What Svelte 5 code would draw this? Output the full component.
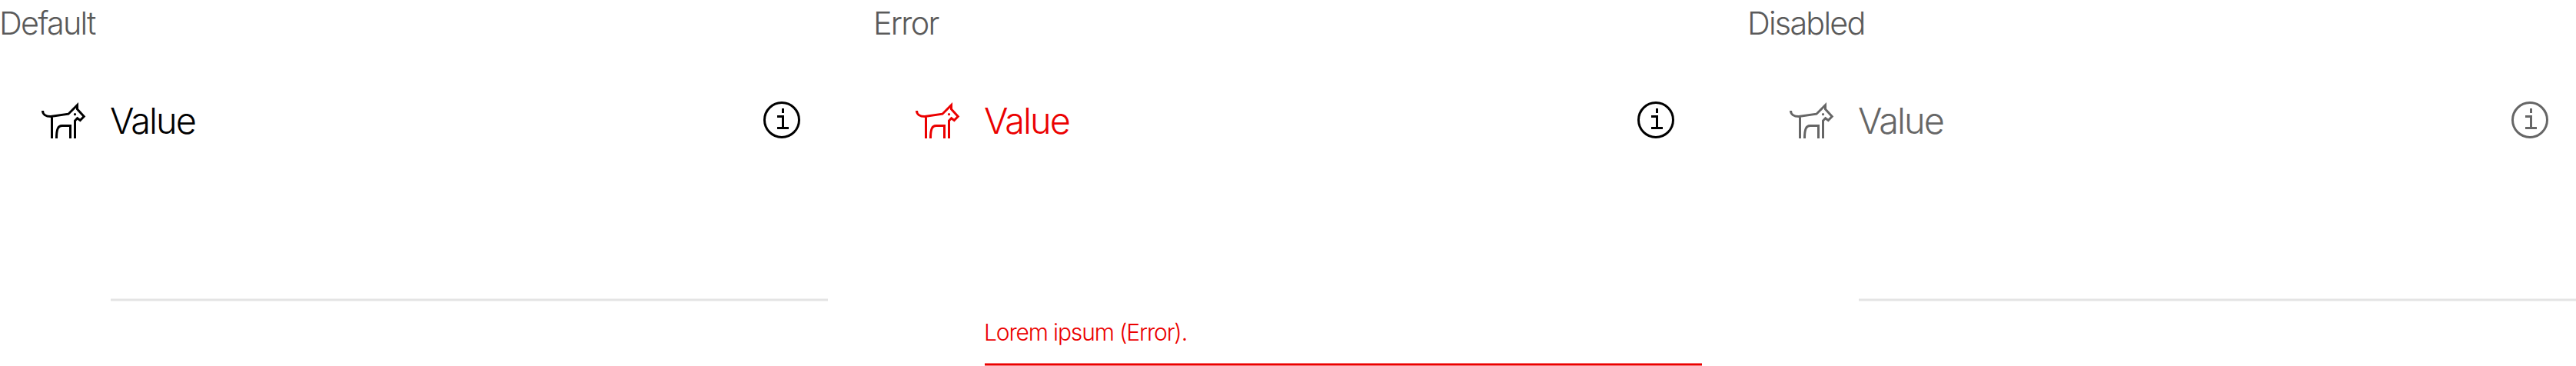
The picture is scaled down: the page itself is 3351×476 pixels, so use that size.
<script>
  const fields = [
    { title: 'Default', state: 'default', value: 'Value', error: '' },
    { title: 'Error', state: 'error', value: 'Value', error: 'Lorem ipsum (Error).' },
    { title: 'Disabled', state: 'disabled', value: 'Value', error: '' }
  ];
</script>

<main>
  {#each fields as field}
    <section class={field.state}>
      <h2>{field.title}</h2>
      <div class="row">
        <svg class="dog" width="60" height="48" viewBox="0 0 60 48" fill="none" stroke="currentColor" stroke-width="3">
          <path d="M1.5 12C1.5 16.5 5.5 19.5 12 19.5L35 16.2L46.5 4.6V10L55.2 19.5L50.3 24.5L46.6 21.8L43.5 25V48M13.5 19.5V48M19.5 48C19.5 36 21.5 31.5 26.5 31.5H37.5V48" />
          <circle cx="43.5" cy="16.7" r="1.6" fill="currentColor" stroke="none" />
        </svg>
        <span class="value">{field.value}</span>
        <svg class="info" width="48" height="48" viewBox="0 0 48 48" fill="none" stroke="currentColor" stroke-width="3">
          <circle cx="24" cy="24" r="22.5" />
          <path d="M25.5 9V15M18 19.5H25.5V34.5M18 34.5H33" />
        </svg>
      </div>
      <div class="foot">
        {#if field.error}<p>{field.error}</p>{/if}
      </div>
      <svg class="line" width="933" height="4" viewBox="0 0 933 4"><rect y=".5" width="933" height="3" fill="currentColor" /></svg>
    </section>
  {/each}
</main>

<style>
  :global(body) { margin: 0; background: #fff; }
  main { display: flex; gap: 60px; width: 3351px; height: 476px; overflow: hidden; font-family: Inter, "Liberation Sans", sans-serif; font-weight: 300; }
  section { width: 1077px; flex: none; display: flex; flex-direction: column; color: #000; }
  h2 { margin: 0; height: 60px; line-height: 60px; font-size: 41.3px; font-weight: 300; letter-spacing: -1.75px; text-indent: -1px; color: #5a5a5a; }
  .row { height: 48px; padding: 72px 36px 0 54px; display: flex; align-items: center; }
  .value { flex: 1; margin-left: 29px; padding-top: 2px; font-size: 46.8px; line-height: 48px; letter-spacing: -1.9px; }
  .foot { height: 208px; padding-left: 143px; }
  .foot p { margin: 0; padding-top: 228px; font-size: 30px; line-height: 48px; letter-spacing: -1.15px; }
  .line { margin-left: 144px; display: block; color: #e4e4e4; }
  .error { color: #eb0000; }
  .error .info { color: #000; }
  .error .foot { height: 292px; }
  .error .line { color: #eb0000; }
  .disabled { color: #666; }
</style>
